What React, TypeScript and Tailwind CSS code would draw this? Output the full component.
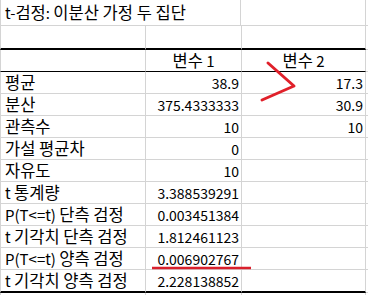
import React from "react";

const rows: [string, string, string][] = [
  ["평균", "38.9", "17.3"],
  ["분산", "375.4333333", "30.9"],
  ["관측수", "10", "10"],
  ["가설 평균차", "0", ""],
  ["자유도", "10", ""],
  ["t 통계량", "3.388539291", ""],
  ["P(T<=t) 단측 검정", "0.003451384", ""],
  ["t 기각치 단측 검정", "1.812461123", ""],
  ["P(T<=t) 양측 검정", "0.006902767", ""],
  ["t 기각치 양측 검정", "2.228138852", ""],
];

function K({ text }: { text: string }) {
  const parts = text.split(/([\uAC00-\uD7A3]+(?:\s+[\uAC00-\uD7A3]+)*)/);
  return (
    <>
      {parts.map((p, i) =>
        /[\uAC00-\uD7A3]/.test(p) ? (
          <span key={i} className="text-[16.5px]">
            {p}
          </span>
        ) : (
          <span key={i} className="text-[15px] whitespace-pre">
            {p}
          </span>
        )
      )}
    </>
  );
}

export default function App() {
  return (
    <div
      className="relative w-[368px] h-[295px] overflow-hidden bg-white text-black text-[14px]"
      style={{ fontFamily: '"Noto Sans CJK KR", "Noto Sans", sans-serif' }}
    >
      {/* title row */}
      <div className="flex h-[26px] border-b border-[#d4d4d4]">
        <div className="w-[241px] border-l border-[#d4d4d4] border-r flex items-center pl-[4px] whitespace-nowrap leading-none">
          <K text="t-검정: 이분산 가정 두 집단" />
        </div>
        <div className="w-[125px] border-r border-[#d4d4d4]" />
        <div className="flex-1" />
      </div>
      {/* empty row with thick bottom */}
      <div className="flex h-[24px]">
        <div className="w-[146px] border-l border-r border-[#d4d4d4] border-b-2 border-b-black" />
        <div className="w-[96px] border-r border-[#d4d4d4] border-b-2 border-b-black" />
        <div className="w-[124px] border-r border-[#d4d4d4] border-b-2 border-b-black" />
        <div className="flex-1 border-b border-[#d4d4d4]" />
      </div>
      {/* header row */}
      <div className="flex h-[22px]">
        <div className="w-[146px] border-l border-r border-[#d4d4d4] border-b border-b-black" />
        <div className="w-[96px] border-r border-[#d4d4d4] border-b border-b-black flex items-center justify-center leading-none whitespace-nowrap">
          <K text="변수 1" />
        </div>
        <div className="w-[124px] border-r border-[#d4d4d4] border-b border-b-black flex items-center justify-center leading-none whitespace-nowrap">
          <K text="변수 2" />
        </div>
        <div className="flex-1 border-b border-[#d4d4d4]" />
      </div>
      {rows.map((r, i) => {
        const last = i === rows.length - 1;
        const bb = last ? "border-b-2 border-b-black" : "border-b border-b-[#d4d4d4]";
        return (
          <div key={i} className={`flex ${last ? "h-[23px]" : "h-[22px]"}`}>
            <div className={`w-[146px] border-l border-r border-[#d4d4d4] ${bb} flex items-center pl-[4px] whitespace-nowrap leading-none`}>
              <K text={r[0]} />
            </div>
            <div className={`w-[96px] border-r border-[#d4d4d4] ${bb} flex items-center justify-end pr-[2px] leading-none`}>
              {r[1]}
            </div>
            <div className={`w-[124px] border-r border-[#d4d4d4] ${bb} flex items-center justify-end pr-[2px] leading-none`}>
              {r[2]}
            </div>
            <div className="flex-1 border-b border-[#d4d4d4]" />
          </div>
        );
      })}
      <div className="flex h-[10px]">
        <div className="w-[146px] border-l border-r border-[#d4d4d4]" />
        <div className="w-[96px] border-r border-[#d4d4d4]" />
        <div className="w-[124px] border-r border-[#d4d4d4]" />
      </div>
      <svg className="absolute left-0 top-0" width="368" height="295" viewBox="0 0 368 295">
        <polyline
          points="268,63 294,86 262,100"
          fill="none"
          stroke="#e0202a"
          strokeWidth="3"
          strokeLinecap="round"
          strokeLinejoin="round"
        />
        <line x1="152" y1="268" x2="251" y2="268" stroke="#d9202c" strokeWidth="2.5" />
      </svg>
    </div>
  );
}
